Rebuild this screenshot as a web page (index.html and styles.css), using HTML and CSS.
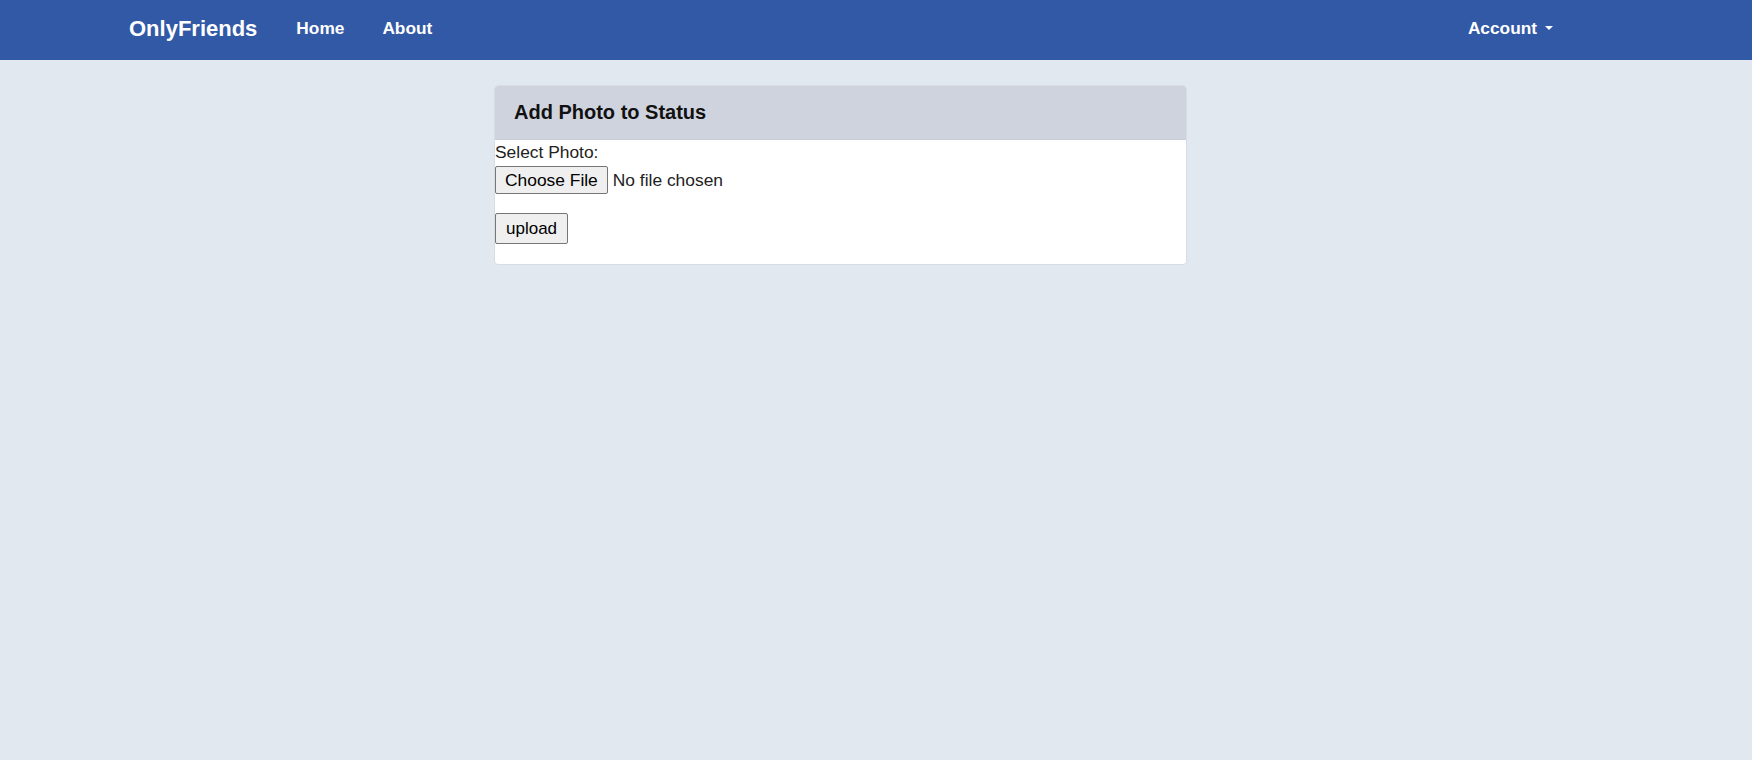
FILE: index.html
```html
<!DOCTYPE html>
<html lang="en">
<head>
<meta charset="utf-8">
<title>OnlyFriends - Add Photo</title>
<link rel="stylesheet" href="styles.css">
</head>
<body>
<nav class="navbar">
  <div class="nav-left">
    <a class="brand" href="#">OnlyFriends</a>
    <a class="nav-link" href="#">Home</a>
    <a class="nav-link" href="#">About</a>
  </div>
  <div class="nav-right">
    <a class="nav-link account" href="#">Account <span class="caret"></span></a>
  </div>
</nav>
<main class="page">
  <section class="card">
    <div class="card-header">Add Photo to Status</div>
    <form class="card-body">
      <label class="field-label" for="photo">Select Photo:</label>
      <input class="file-input" type="file" id="photo" name="photo">
      <button class="upload-btn" type="button">upload</button>
    </form>
  </section>
</main>
</body>
</html>
```

FILE: styles.css
```css
* { box-sizing: border-box; }
html, body { margin: 0; padding: 0; }
body {
  background: #e1e8f0;
  font-family: "Liberation Sans", Arial, sans-serif;
  color: #222;
  min-height: 760px;
}
.navbar {
  height: 60px;
  background: #3259a5;
  display: flex;
  align-items: center;
  justify-content: space-between;
  padding: 0 199px 4px 129px;
}
.nav-left, .nav-right { display: flex; align-items: center; }
.navbar a { color: #fff; text-decoration: none; font-weight: bold; }
.brand { font-size: 22px; margin-right: 39px; position: relative; top: 1px; }
.nav-link { font-size: 17.3px; margin-right: 38px; }
.nav-right .nav-link { margin-right: 0; display: flex; align-items: center; }
.caret {
  display: inline-block;
  width: 0; height: 0;
  margin-left: 8px;
  border-left: 4.5px solid transparent;
  border-right: 4.5px solid transparent;
  border-top: 4.5px solid #fff;
}
.page { padding: 25px 0 0 494px; }
.card {
  width: 693px;
  background: #fff;
  border: 1px solid #d8dce3;
  border-radius: 4px;
  overflow: hidden;
}
.card-header {
  height: 54px;
  background: #cfd3de;
  font-weight: bold;
  font-size: 20px;
  color: #111;
  padding: 0 0 0 19px;
  display: flex;
  align-items: center;
  border-bottom: 1px solid #c9cdd8;
}
.card-body {
  display: flex;
  flex-direction: column;
  align-items: flex-start;
  padding: 2px 0 20px 0;
  font-size: 17.4px;
}
.field-label { line-height: 20px; color: #222; }
.file-input {
  font-family: "Liberation Sans", Arial, sans-serif;
  font-size: 17.4px;
  color: #222;
  margin: 4px 0 0 0;
}
.file-input::file-selector-button {
  font-family: "Liberation Sans", Arial, sans-serif;
  font-size: 17.4px;
  height: 28px;
  padding: 0 9px;
  margin-right: 5px;
  background: #efefef;
  border: 1px solid #767676;
  border-radius: 2px;
  color: #000;
}
.upload-btn {
  font-family: "Liberation Sans", Arial, sans-serif;
  font-size: 17px;
  height: 31px;
  padding: 0 10px;
  margin-top: 19px;
  background: #efefef;
  border: 1px solid #767676;
  border-radius: 2px;
  color: #000;
}
```
